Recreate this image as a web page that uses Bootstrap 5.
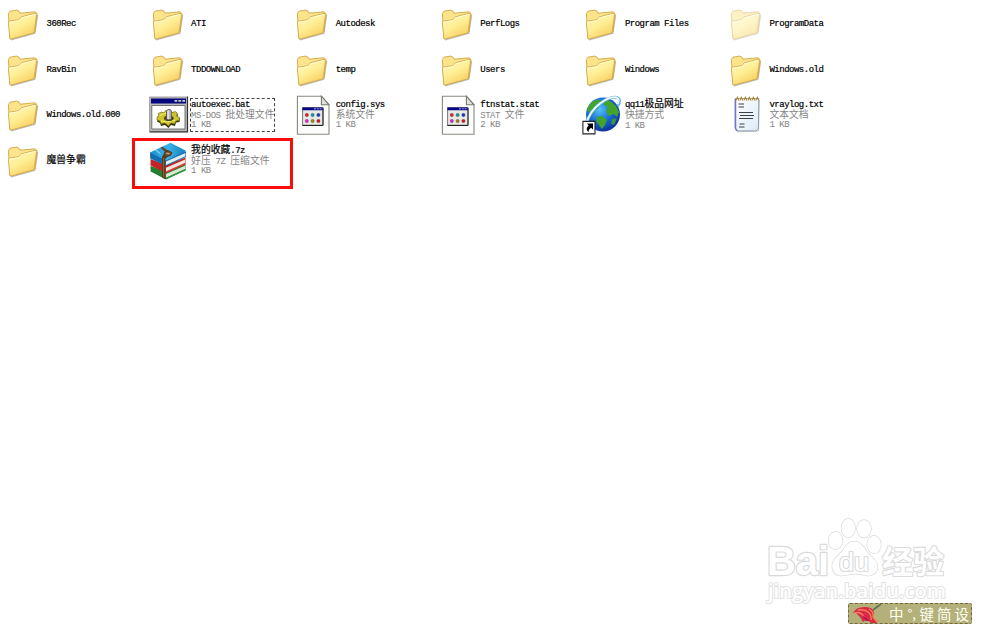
<!DOCTYPE html>
<html lang="zh-CN">

<head>
    <meta charset="UTF-8">
    <title>本地磁盘</title>
    <meta name="viewport" content="width=device-width, initial-scale=1" />
    <link href="https://cdn.jsdelivr.net/npm/bootstrap@5.3.0/dist/css/bootstrap.min.css" rel="stylesheet">
    <style>
        body {
            height: 625px;
            background: #fff;
            color: #000;
            font-family: "Liberation Mono", "Noto Sans CJK SC", monospace;
            font-size: 9px;
            line-height: 9.8px;
            letter-spacing: -.5px;
        }

        .files {
            display: grid;
            grid-template-columns: repeat(6, 144.6px);
            grid-auto-rows: 45.5px;
            padding-top: 1.25px;
        }

        .tile {
            white-space: pre;
        }

        .icon {
            width: 46px;
            height: 45.5px;
            flex: none;
        }

        .fname {
            -webkit-text-stroke: .2px #000;
        }

        .info {
            color: #858585;
        }

        .zh {
            font-size: 9.8px;
            line-height: 1;
            letter-spacing: 0;
        }

        .label {
            padding: 2px 0 0 .5px;
        }

        .focused {
            outline: 1px dashed #444;
            outline-offset: 0;
        }

        .highlight {
            position: absolute;
            left: 131.5px;
            top: 138px;
            width: 161.5px;
            height: 51px;
            border: 3px solid #f80c0c;
        }

        .watermark {
            position: absolute;
            left: 760px;
            top: 512px;
            letter-spacing: 0;
        }

        .ime {
            position: absolute;
            left: 848px;
            top: 603px;
            width: 124px;
            height: 21px;
            background: #b4b07a;
            border: 1px dashed #77683f;
            border-radius: 2px;
            color: #fffff0;
            font: 14.5px/19px "Noto Sans CJK SC", sans-serif;
            letter-spacing: 0;
        }

        .punct {
            width: 12px;
            font-size: 13px;
        }

        .keys {
            gap: 3px;
        }
    </style>
</head>

<body class="position-relative overflow-hidden">
    <!-- icon definitions -->
    <svg width="0" height="0" class="position-absolute">
        <defs>
            <linearGradient id="gold" x1="0" y1="0" x2=".6" y2="1">
                <stop offset="0" stop-color="#fffbc2" />
                <stop offset=".55" stop-color="#ffee94" />
                <stop offset="1" stop-color="#f8cf60" />
            </linearGradient>
            <radialGradient id="sea" cx=".4" cy=".35" r=".7">
                <stop offset="0" stop-color="#55c3fa" />
                <stop offset=".55" stop-color="#1768cf" />
                <stop offset="1" stop-color="#0b2c93" />
            </radialGradient>
            <linearGradient id="blueCover" x1="0" x2="1">
                <stop offset="0" stop-color="#1d8ecb" />
                <stop offset=".5" stop-color="#3bb4ea" />
                <stop offset="1" stop-color="#147cbc" />
            </linearGradient>
            <linearGradient id="sheet" x1="0" y1="0" x2="1" y2="1">
                <stop offset="0" stop-color="#fff" />
                <stop offset="1" stop-color="#dcebf8" />
            </linearGradient>
            <symbol id="folder" viewBox="0 0 46 45.5">
                <path d="M11 38.8 34.8 32.2 37.6 14" fill="none" stroke="#777" stroke-width="1.3" opacity=".5" />
                <path d="M8.4 12.5 10 10.2 16.5 9.1 19 10.2 20 12.2 35 10.8 37 12.5 35 31 10 38Z" fill="#fbe48c" stroke="#d0a544" stroke-width=".9" stroke-linejoin="round" />
                <path d="M9.2 20.2 18.6 18.7 21.5 15.8 35 12.3Q36.6 12.1 36.5 14L34.2 30.4Q34 31.8 32.6 32.3L11.2 38Q10 38.2 9.8 36.8L8.4 21.8Q8.3 20.4 9.2 20.2Z" fill="url(#gold)" stroke="#cda243" stroke-width=".8" />
                <path d="M9.6 21.2 19 19.6 22 16.7 35.5 13.3" fill="none" stroke="#fffde0" stroke-width=".8" />
            </symbol>
            <symbol id="appfile" viewBox="0 0 46 45.5">
                <path d="M8.4 4.2H32.4L40 13V42.2H8.4Z" fill="#fdfdfd" stroke="#868980" stroke-width="1.1" />
                <path d="M32.4 4.2V12.8H40Z" fill="#dfe1dd" stroke="#777b72" stroke-width="1.1" />
                <path d="M13.6 15.5H34V33.2H13.6Z" fill="#e9e9e6" stroke="#777" />
                <path d="M34 16V33.5H13.3" fill="none" stroke="#222" />
                <path d="M13.4 15.4H33.7V18.3H13.4Z" fill="#06068c" />
                <path d="M25 16.8H32.5" stroke="#b8c0e0" stroke-width=".9" stroke-dasharray="2 .8" />
                <g stroke="#333" stroke-width=".3">
                    <circle cx="17.8" cy="23" r="1.7" fill="#e02030" />
                    <circle cx="23.6" cy="23" r="1.7" fill="#109c9c" />
                    <circle cx="29.4" cy="23" r="1.7" fill="#1638d8" />
                    <circle cx="17.8" cy="29" r="1.7" fill="#e524d4" />
                    <circle cx="23.6" cy="29" r="1.7" fill="#969018" />
                    <circle cx="29.4" cy="29" r="1.7" fill="#d81828" />
                </g>
            </symbol>
            <symbol id="batch" viewBox="0 0 46 45.5">
                <path d="M4.2 4.7H42.8V40.2H4.2Z" fill="#b9b9b9" />
                <path d="M42.5 4.5V39.9H4.5" fill="none" stroke="#333" stroke-width="1.2" />
                <path d="M4.6 39.5V5.1H42" fill="none" stroke="#999" stroke-width=".8" />
                <path d="M6 6.4H41V11.6H6Z" fill="#06067e" />
                <path d="M29.5 8.8H40.3" stroke="#c8c8c8" stroke-width="1.8" stroke-dasharray="2.8 1.1" />
                <path d="M6.8 13.5H40V37H6.8Z" fill="#fff" stroke="#666" stroke-width=".9" />
                <path d="M14 23 17 20.5 20 21 21 19H26L28 21 31 20 33 22.5 32 25 35 26.5 34.500 30 31 30.500 30 34 26 33 23.500 36 20 33 16 34 15 31 12 29.500Z" fill="#34320c" />
                <path d="M14 24 13 21.500 16.500 20 19 21 20.500 18.500 25.500 18.500 27 20.500 30.500 19.500 32.500 22 31.500 24 34.500 25.500 34 28.500 31 29 29.500 32 26 31 23.500 34 20 31 16 32 15 29 12 28 12 25Z" fill="#cdc42c" stroke="#6b6616" stroke-width=".6" />
                <path d="M14.500 24Q18 21 22 21M16 29Q22 31.500 30 28" fill="none" stroke="#f6f17c" stroke-width="1" />
                <ellipse cx="23.8" cy="26.2" rx="4.8" ry="2.8" fill="#4d4a20" />
                <path d="M21.500 19.500Q21.500 17.500 24 17.500T26.300 19.500V27Q24 29 21.500 27Z" fill="#bcbcbc" stroke="#555" stroke-width=".9" />
                <path d="M23.1 18.5V27" stroke="#f6f6f6" />
            </symbol>
            <symbol id="globe" viewBox="0 0 46 45.5">
                <circle cx="25" cy="22.5" r="17" fill="url(#sea)" />
                <g fill="#43a42c">
                    <path d="M10 15 14 9.5 20 7.5 23 9 20 13 21 16 17 18 16 22 12 20 9 19Z" />
                    <path d="M26 7 32 9 38 14 41 20 39 25 36 22 31 24 28 19 30 15 26 13Z" />
                    <path d="M19 25 24 24 29 28 27 33 24 37 21 33 18 29Z" />
                    <path d="M34 27 39 26 36 33 33 32Z" opacity=".8" />
                </g>
                <path d="M8.5 31Q12 19 22 11.5T39.2 5.5Q44 8 39.5 14" fill="none" stroke="#6fb4de" stroke-width="3" />
                <path d="M8.5 31Q12 19 22 11.5T38.5 5.4Q42.5 7.5 39.5 12" fill="none" stroke="#edfaff" stroke-width="1.7" />
                <path d="M4.9 29.4H17V41.9H4.9Z" fill="#fff" stroke="#222" stroke-width="1.1" />
                <path d="M8.8 31.5H15V37.6L13 35.8Q10.3 37.6 10.6 40.2 6.7 37.2 10.7 33.6Z" fill="#000" />
            </symbol>
            <symbol id="notepad" viewBox="0 0 46 45.5">
                <path d="M14 39.8 35.6 39 36.4 8" fill="none" stroke="#999" opacity=".5" />
                <path d="M12.2 6.5H35.8L35.4 37 33 38.9H14L12.2 36Z" fill="url(#sheet)" stroke="#7f8a9c" stroke-width=".8" />
                <path d="M12.5 7V36.500L14 38.900" fill="none" stroke="#7475c8" stroke-width="1.5" />
                <path d="M15.5 12H21M15.5 15H21M16 20.500H30M17 23.500H31M16 26.500H30M16.5 32H21.500M16 35H21.500" stroke="#3c4148" />
                <path d="M13 8.4 14.3 5.3 15.8 8.4M17 8.4 18.3 5.3 19.8 8.4M21 8.4 22.3 5.3 23.8 8.4M25 8.4 26.3 5.3 27.8 8.4M29 8.4 30.3 5.3 31.8 8.4M33 8.4 34.3 5.3 35.6 8.4" fill="none" stroke="#ad862b" stroke-width="1.1" />
            </symbol>
            <symbol id="books" viewBox="0 0 46 45.5">
                <!-- green, red and blue volumes, then the strap -->
                <path d="M5.500 28 5.600 33.500 21 41.500 40.500 32V26L21 33Z" fill="#267e32" />
                <path d="M21 36 40 27.800V31L21 39.800Z" fill="#dce8d4" />
                <path d="M21 40.600 40.500 31.800" stroke="#2d9640" stroke-width="1.3" />
                <path d="M5.500 21 5.600 27.500 21 35 40.500 26V19.500L21 27Z" fill="#c42426" />
                <path d="M21 29.800 40 21.600V24.900L21 33.500Z" fill="#f2e4dc" />
                <path d="M21 34.500 40.500 25.700" stroke="#db3c31" stroke-width="1.3" />
                <path d="M5 14.500 5.200 20.500 21 28 41 19V13.400Z" fill="#1470ad" />
                <path d="M21 23.600 40.400 15V18.200L21 26.900Z" fill="#e6edf0" />
                <path d="M5 14.500 25.500 4.800 41.200 13 21 22.600Z" fill="url(#blueCover)" />
                <path d="M15.500 9.500 17.300 8.700 26 14.800 23 17Z" fill="#654228" />
                <path d="M19.500 16 17 18.500V39.500L20.300 41.200V21L24 17Z" fill="#5d3a20" />
                <path d="M18.600 20V39.500" stroke="#95704a" stroke-width=".8" />
                <path d="M19.500 14.500 23 12.500 26.800 14.500 25.500 17.500 21.500 18.500 19 17Z" fill="#7c5230" stroke="#3c2312" stroke-width=".8" />
                <path d="M21.500 15 24.300 16" stroke="#d9b96b" stroke-width="1.2" />
                <path d="M11 12.200 15.500 16" stroke="#a6e0f4" stroke-width="1.300" stroke-dasharray="1.2 .6" />
            </symbol>
        </defs>
    </svg>

    <main class="files">
        <div class="tile d-flex align-items-center"><svg class="icon"><use href="#folder" /></svg><div class="label fname">360Rec</div></div>
        <div class="tile d-flex align-items-center"><svg class="icon"><use href="#folder" /></svg><div class="label fname">ATI</div></div>
        <div class="tile d-flex align-items-center"><svg class="icon"><use href="#folder" /></svg><div class="label fname">Autodesk</div></div>
        <div class="tile d-flex align-items-center"><svg class="icon"><use href="#folder" /></svg><div class="label fname">PerfLogs</div></div>
        <div class="tile d-flex align-items-center"><svg class="icon"><use href="#folder" /></svg><div class="label fname">Program Files</div></div>
        <div class="tile d-flex align-items-center"><svg class="icon opacity-50"><use href="#folder" /></svg><div class="label fname">ProgramData</div></div>

        <div class="tile d-flex align-items-center"><svg class="icon"><use href="#folder" /></svg><div class="label fname">RavBin</div></div>
        <div class="tile d-flex align-items-center"><svg class="icon"><use href="#folder" /></svg><div class="label fname">TDDOWNLOAD</div></div>
        <div class="tile d-flex align-items-center"><svg class="icon"><use href="#folder" /></svg><div class="label fname">temp</div></div>
        <div class="tile d-flex align-items-center"><svg class="icon"><use href="#folder" /></svg><div class="label fname">Users</div></div>
        <div class="tile d-flex align-items-center"><svg class="icon"><use href="#folder" /></svg><div class="label fname">Windows</div></div>
        <div class="tile d-flex align-items-center"><svg class="icon"><use href="#folder" /></svg><div class="label fname">Windows.old</div></div>

        <div class="tile d-flex align-items-center"><svg class="icon"><use href="#folder" /></svg><div class="label fname">Windows.old.000</div></div>
        <div class="tile d-flex align-items-center">
            <svg class="icon"><use href="#batch" /></svg>
            <div class="label focused"><div class="fname">autoexec.bat</div><div class="info">MS-DOS <span class="zh">批处理文件</span></div><div class="info">1 KB</div></div>
        </div>
        <div class="tile d-flex align-items-center">
            <svg class="icon"><use href="#appfile" /></svg>
            <div class="label"><div class="fname">config.sys</div><div class="info"><span class="zh">系统文件</span></div><div class="info">1 KB</div></div>
        </div>
        <div class="tile d-flex align-items-center">
            <svg class="icon"><use href="#appfile" /></svg>
            <div class="label"><div class="fname">ftnstat.stat</div><div class="info">STAT <span class="zh">文件</span></div><div class="info">2 KB</div></div>
        </div>
        <div class="tile d-flex align-items-center">
            <svg class="icon"><use href="#globe" /></svg>
            <div class="label"><div class="fname">qq11<span class="zh">极品网址</span></div><div class="info"><span class="zh">快捷方式</span></div><div class="info">1 KB</div></div>
        </div>
        <div class="tile d-flex align-items-center">
            <svg class="icon"><use href="#notepad" /></svg>
            <div class="label"><div class="fname">vraylog.txt</div><div class="info"><span class="zh">文本文档</span></div><div class="info">1 KB</div></div>
        </div>

        <div class="tile d-flex align-items-center"><svg class="icon"><use href="#folder" /></svg><div class="label fname"><span class="zh">魔兽争霸</span></div></div>
        <div class="tile d-flex align-items-center">
            <svg class="icon"><use href="#books" /></svg>
            <div class="label"><div class="fname"><span class="zh">我的收藏</span>.7z</div><div class="info"><span class="zh">好压</span> 7Z <span class="zh">压缩文件</span></div><div class="info">1 KB</div></div>
        </div>
    </main>

    <div class="highlight"></div>

    <!-- site watermark -->
    <svg class="watermark" width="200" height="95" fill="#fff" stroke="#dadada" stroke-width="1.4" stroke-linejoin="round">
        <g font-family="Liberation Sans, sans-serif" paint-order="stroke">
            <text x="7" y="63" font-size="40" font-weight="bold" stroke-width="2.4" textLength="62" lengthAdjust="spacingAndGlyphs">Bai</text>
            <ellipse cx="75.5" cy="28.500" rx="6.800" ry="8.800" />
            <ellipse cx="88.3" cy="16" rx="6.800" ry="9.200" />
            <ellipse cx="104" cy="16.800" rx="7" ry="8.800" />
            <ellipse cx="114" cy="32.500" rx="6.800" ry="8.800" />
            <path d="M94.500 29.500C101 29.500 103.500 35 107 40 111 45 117.500 48 117.500 54.500 117.500 61 112.500 64 107 63.500 101 62.500 98 61.800 94 61.800 89 61.800 86 64 80.500 63.500 74.500 63 71.500 58.500 72.500 52 73.500 46 79.500 43 83 38 86 33 89.500 29.500 94.500 29.500Z" />
            <text x="79" y="59" font-size="25" stroke-width="2.200" textLength="30" lengthAdjust="spacingAndGlyphs">du</text>
            <text x="122" y="61" font-size="31" font-weight="bold" stroke-width="2.200" font-family="Noto Sans CJK SC, sans-serif" textLength="62">经验</text>
            <text x="8" y="86" font-size="20.500" stroke="#e2e2e2" stroke-width="2" font-family="Open Sans, sans-serif" font-weight="600" textLength="178" lengthAdjust="spacingAndGlyphs">jingyan.baidu.com</text>
        </g>
    </svg>

    <!-- input method bar -->
    <div class="ime d-flex align-items-center">
        <svg width="36" height="19" class="flex-shrink-0">
            <path d="M24 6 32 0" stroke="#557657" stroke-width="1.6" />
            <path d="M4 9Q7 3 15 3 24 2 25 9L24 14 28 19H22L18 15 14 18 11 13 7 9Z" fill="#dc2949" />
            <path d="M9 6Q15 5 19 8T22 16M5 9Q12 7 15 13M20 5Q25 8 24 13L29 18" fill="none" stroke="#f28550" stroke-width="1.3" />
            <path d="M13 11 17 17 21 17Z" fill="#ae1550" />
        </svg>
        <span class="ms-1">中</span><span class="punct ms-1">°,</span>
        <div class="keys d-flex"><span>键</span><span>简</span><span>设</span></div>
    </div>

    <script src="https://cdn.jsdelivr.net/npm/bootstrap@5.3.0/dist/js/bootstrap.bundle.min.js"></script>
</body>

</html>
